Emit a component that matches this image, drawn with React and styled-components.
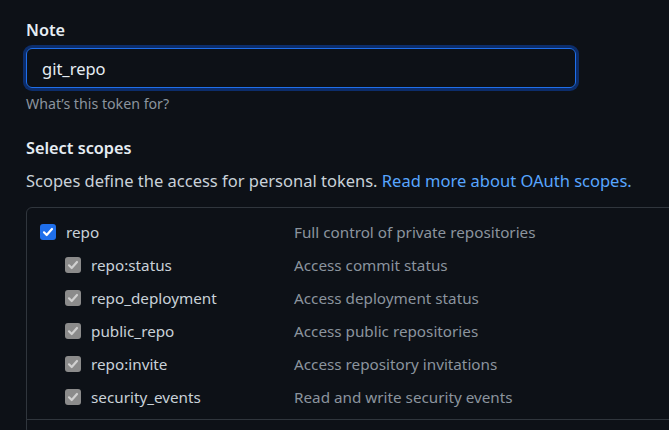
import React from "react";
import styled, { createGlobalStyle } from "styled-components";

const Global = createGlobalStyle`
  html, body { margin: 0; padding: 0; background: #0d1117; overflow: hidden; }
  body { font-family: "Noto Sans", "Open Sans", sans-serif; color: #c9d1d9; }
  * { box-sizing: border-box; }
`;

const Page = styled.div`
  width: 669px;
  height: 430px;
  padding: 20px 0 0 26px;
  overflow: hidden;
`;

const Label = styled.div`
  font-size: 16.3px;
  font-weight: 600;
  color: #e6edf3;
  line-height: 20px;
`;

const Input = styled.div`
  margin-top: 8px;
  width: 550px;
  height: 40px;
  border: 1px solid #1f6feb;
  border-radius: 6px;
  box-shadow: 0 0 0 3px #0c2d6b;
  display: flex;
  align-items: center;
  padding-left: 15px;
  font-size: 16.5px;
  color: #e6edf3;
`;

const Hint = styled.div`
  margin-top: 7px;
  font-size: 14.2px;
  color: #8b949e;
  line-height: 18px;
`;

const Heading = styled(Label)`
  margin-top: 25px;
`;

const Para = styled.p`
  margin: 13px 0 0;
  font-size: 16.5px;
  line-height: 20px;
  color: #c9d1d9;
`;

const Link = styled.a`
  color: #58a6ff;
  text-decoration: none;
`;

const Box = styled.div`
  margin-top: 16px;
  width: 700px;
  border: 1px solid #30363d;
  border-radius: 6px;
`;

const Group = styled.div`
  padding: 7px 0 6px;
  border-bottom: 1px solid #30363d;
`;

const Row = styled.div`
  display: grid;
  grid-template-columns: 267px 1fr;
  height: 33px;
  align-items: center;
`;

const Scope = styled.div`
  display: flex;
  align-items: center;
  padding-left: ${(p) => (p.$child ? 38 : 13)}px;
  font-size: 15.25px;
  color: #c9d1d9;
`;

const Check = styled.span`
  width: 16px;
  height: 16px;
  border-radius: 3px;
  background: ${(p) => (p.$disabled ? "#8b8b8b" : "#1f6feb")};
  display: inline-flex;
  align-items: center;
  justify-content: center;
  margin-right: 10px;
  flex: none;
`;

const Desc = styled.div`
  font-size: 15.25px;
  color: #8b949e;
`;

const Tick = ({ color }) => (
  <svg width="12" height="12" viewBox="0 0 12 12">
    <path d="M2 6.3 L4.7 9 L10 3" fill="none" stroke={color} strokeWidth="2.2" strokeLinecap="round" strokeLinejoin="round" />
  </svg>
);

const subs = [
  ["repo:status", "Access commit status"],
  ["repo_deployment", "Access deployment status"],
  ["public_repo", "Access public repositories"],
  ["repo:invite", "Access repository invitations"],
  ["security_events", "Read and write security events"],
];

export default function App() {
  return (
    <Page>
      <Global />
      <Label>Note</Label>
      <Input>git_repo</Input>
      <Hint>What’s this token for?</Hint>
      <Heading>Select scopes</Heading>
      <Para>
        Scopes define the access for personal tokens. <Link href="#">Read more about OAuth scopes.</Link>
      </Para>
      <Box>
        <Group>
          <Row>
            <Scope>
              <Check><Tick color="#ffffff" /></Check>
              repo
            </Scope>
            <Desc>Full control of private repositories</Desc>
          </Row>
          {subs.map(([name, desc]) => (
            <Row key={name}>
              <Scope $child>
                <Check $disabled><Tick color="#d0d0d0" /></Check>
                {name}
              </Scope>
              <Desc>{desc}</Desc>
            </Row>
          ))}
        </Group>
        <Group />
      </Box>
    </Page>
  );
}
